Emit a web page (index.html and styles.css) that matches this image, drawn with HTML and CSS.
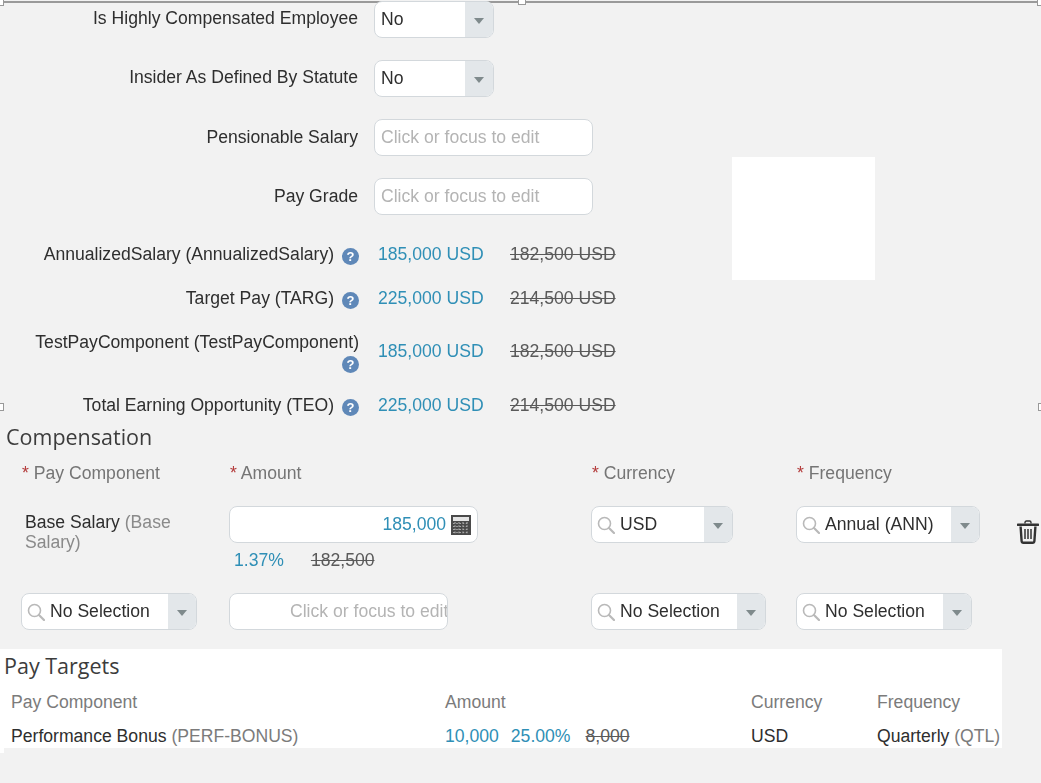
FILE: index.html
```html
<!DOCTYPE html>
<html lang="en">
<head>
<meta charset="utf-8">
<title>Compensation</title>
<link rel="stylesheet" href="styles.css">
</head>
<body>
<svg class="defs" width="0" height="0" aria-hidden="true">
  <symbol id="mag" viewBox="0 0 18 18"><circle cx="7.5" cy="7.5" r="6" fill="none" stroke="#b9b9b9" stroke-width="1.6"/><path d="M12 12l5 5" stroke="#b9b9b9" stroke-width="2.2" stroke-linecap="round"/></symbol>
  <symbol id="help" viewBox="0 0 17 17"><circle cx="8.5" cy="8.5" r="8.5" fill="#5f88b8"/><text x="8.5" y="13" text-anchor="middle" class="help-q">?</text></symbol>
</svg>
<div class="page">
  <div class="rule"></div>
  <span class="handle h-top-a"></span><span class="handle h-top-b"></span><span class="handle h-top-c"></span>
  <span class="handle h-mid-a"></span><span class="handle h-mid-b"></span>
  <div class="blank"></div>

  <section class="details">
    <div class="field-row"><label class="label">Is Highly Compensated Employee</label>
      <div class="box sel w-120"><span class="box-text">No</span><span class="arrow"></span></div></div>
    <div class="field-row"><label class="label">Insider As Defined By Statute</label>
      <div class="box sel w-120"><span class="box-text">No</span><span class="arrow"></span></div></div>
    <div class="field-row"><label class="label">Pensionable Salary</label>
      <div class="box w-219"><span class="box-text ph">Click or focus to edit</span></div></div>
    <div class="field-row"><label class="label">Pay Grade</label>
      <div class="box w-219"><span class="box-text ph">Click or focus to edit</span></div></div>
  </section>

  <section class="values">
    <div class="value-row"><div class="vlabel">AnnualizedSalary (AnnualizedSalary) <svg class="help"><use href="#help"/></svg></div><span class="new">185,000 USD</span><s class="old">182,500 USD</s></div>
    <div class="value-row"><div class="vlabel">Target Pay (TARG) <svg class="help"><use href="#help"/></svg></div><span class="new">225,000 USD</span><s class="old">214,500 USD</s></div>
    <div class="value-row tall"><div class="vlabel">TestPayComponent (TestPayComponent) <svg class="help"><use href="#help"/></svg></div><span class="new">185,000 USD</span><s class="old">182,500 USD</s></div>
    <div class="value-row"><div class="vlabel">Total Earning Opportunity (TEO) <svg class="help"><use href="#help"/></svg></div><span class="new">225,000 USD</span><s class="old">214,500 USD</s></div>
  </section>

  <section class="comp">
    <h2 class="title">Compensation</h2>
    <div class="comp-grid">
      <div class="head"><b>*</b> Pay Component</div>
      <div class="head"><b>*</b> Amount</div>
      <div class="head"><b>*</b> Currency</div>
      <div class="head"><b>*</b> Frequency</div>
      <div></div>

      <div class="base"><span class="dark">Base Salary</span> (Base Salary)</div>
      <div>
        <div class="box w-249 amount"><span class="amount-val">185,000</span>
          <svg class="calc" viewBox="0 0 20 20"><rect width="20" height="20" fill="#4a4a4a"/><rect x="2" y="2" width="16" height="4" fill="#e4e4e4"/><path d="M2 8.5h16M2 11.5h16M2 14.5h16M2 17.5h16M4 7v12M8 7v12M12 7v12M16 7v12" stroke="#a8a8a8" stroke-width="1.2" stroke-dasharray="1.6 1.6"/></svg>
        </div>
        <div class="sub"><span class="new">1.37%</span><s class="old">182,500</s></div>
      </div>
      <div class="box sel w-142"><svg class="mag"><use href="#mag"/></svg><span class="box-text">USD</span><span class="arrow"></span></div>
      <div class="box sel w-184"><svg class="mag"><use href="#mag"/></svg><span class="box-text">Annual (ANN)</span><span class="arrow"></span></div>
      <svg class="trash" viewBox="0 0 22 24"><path d="M8 3.5V2.4C8 1.6 8.6 1 9.4 1h3.2c.8 0 1.4.6 1.4 1.4v1.1" fill="none" stroke="#333" stroke-width="1.4"/><path d="M1 4.8h20" stroke="#333" stroke-width="2.6" stroke-linecap="round"/><path d="M3.6 6.5l1 14.5c.1 1.1.8 1.8 1.8 1.8h9.2c1 0 1.7-.7 1.8-1.8l1-14.5" fill="none" stroke="#333" stroke-width="2.4"/><path d="M8 9v10M11 9v10M14 9v10" stroke="#333" stroke-width="1.5"/></svg>

      <div class="box sel w-176"><svg class="mag"><use href="#mag"/></svg><span class="box-text">No Selection</span><span class="arrow"></span></div>
      <div class="box w-219 clip"><span class="clip-text">Click or focus to edit</span></div>
      <div class="box sel w-175"><svg class="mag"><use href="#mag"/></svg><span class="box-text">No Selection</span><span class="arrow"></span></div>
      <div class="box sel w-176"><svg class="mag"><use href="#mag"/></svg><span class="box-text">No Selection</span><span class="arrow"></span></div>
      <div></div>
    </div>
  </section>

  <section class="targets">
    <h2 class="title title-t">Pay Targets</h2>
    <div class="t-grid">
      <div class="t-head">Pay Component</div><div class="t-head">Amount</div><div class="t-head">Currency</div><div class="t-head">Frequency</div>
      <div><span class="dark">Performance Bonus</span> <span class="muted">(PERF-BONUS)</span></div>
      <div class="t-amount"><span class="new">10,000</span><span class="new">25.00%</span><s class="old">8,000</s></div>
      <div class="dark">USD</div>
      <div><span class="dark">Quarterly</span> <span class="muted">(QTL)</span></div>
    </div>
  </section>
</div>
</body>
</html>
```

FILE: styles.css
```css
* { box-sizing: border-box; }
html, body { margin: 0; padding: 0; background: #f2f2f2; }
body { font-family: "Liberation Sans", Arial, sans-serif; font-size: 17.6px; color: #2e2e2e; overflow: hidden; }
.defs { position: absolute; }
.page { position: relative; width: 1041px; height: 783px; overflow: hidden; padding-top: 1px; filter: blur(0.35px); }

.rule { position: absolute; left: 0; right: 0; top: 1px; height: 2px; background: #9a9a9a; }
.handle { position: absolute; width: 8px; height: 8px; background: #fff; border: 1px solid #999; }
.h-top-a { left: -4px; top: -2px; }
.h-top-b { left: 518px; top: -3px; }
.h-top-c { left: 1037px; top: -2px; }
.h-mid-a { left: -4px; top: 403px; }
.h-mid-b { left: 1038px; top: 403px; }
.blank { position: absolute; left: 732px; top: 157px; width: 143px; height: 123px; background: #fff; }

.details { display: flex; flex-direction: column; gap: 22px; }
.field-row { display: flex; align-items: center; gap: 16px; }
.label { width: 358px; text-align: right; position: relative; top: -1px; white-space: nowrap; }
.field-row:nth-child(n+3) .label { top: 0; }

.box { position: relative; display: flex; align-items: center; height: 37px; background: #fff; border: 1.5px solid #d3d8dc; border-radius: 8px; overflow: hidden; flex: none; }
.box-text { padding-left: 6px; padding-bottom: 1px; white-space: nowrap; }
.sel .mag + .box-text { padding-left: 5px; }
.ph { color: #b4b4b4; padding-bottom: 0; }
.arrow { margin-left: auto; width: 28px; align-self: stretch; background: #e3e7ea; display: flex; align-items: center; justify-content: center; }
.arrow::after { content: ""; margin-top: 3px; border-left: 5px solid transparent; border-right: 5px solid transparent; border-top: 6px solid #7f8a8c; }
.mag { width: 18px; height: 18px; margin-left: 5px; flex: none; }

.w-120 { width: 120px; }
.w-249 { width: 249px; }
.w-142 { width: 142px; }
.w-184 { width: 184px; }
.w-175 { width: 175px; }
.w-176 { width: 176px; }
.w-219 { width: 219px; }

.values { margin-top: 28px; display: flex; flex-direction: column; gap: 22px; }
.value-row { display: grid; grid-template-columns: 359px 151px auto; line-height: 22px; align-items: center; }
.vlabel { padding-left: 29px; text-align: right; }
.tall { margin-bottom: -3px; }
.tall .new, .tall .old { padding-bottom: 4px; }
.help { width: 17px; height: 17px; vertical-align: -5px; margin-left: 3px; }
.tall .help { vertical-align: -3px; }
.help-q { font: bold 13px "Liberation Sans", Arial, sans-serif; fill: #fff; }
.new { color: #2f8fb6; justify-self: start; padding-left: 19px; white-space: nowrap; }
.old { color: #5a5a5a; white-space: nowrap; }

.comp { margin-top: 6px; }
.title { margin: 0; font: 400 21.5px/30px "Open Sans", sans-serif; color: #3c3c3c; padding-left: 6px; }
.comp-grid { display: grid; grid-template-columns: 208px 362px 205px 221px auto; padding-left: 21px; margin-top: 10px; align-items: start; }
.head { color: #757575; line-height: 22px; height: 44px; padding-left: 1px; }
.head b { color: #b33a3a; font-weight: 400; }
.base { color: #8a8a8a; line-height: 20px; padding: 6px 10px 0 4px; }
.dark { color: #2e2e2e; }
.amount { justify-content: flex-end; padding-right: 6px; }
.amount-val { color: #2f8fb6; margin-right: 5px; }
.calc { width: 20px; height: 20px; }
.sub { display: flex; margin-top: 6px; height: 44px; line-height: 22px; }
.sub .new { padding-left: 5px; }
.sub .old { margin-left: 27px; }
.trash { width: 22px; height: 24px; margin-top: 14px; }
.clip { padding: 0; }
.clip-text { color: #b4b4b4; white-space: nowrap; padding-left: 60px; padding-bottom: 1px; }

.targets { position: relative; margin-top: 19px; width: 1002px; height: 99px; background: #fff; }
.targets::after { content: ""; position: absolute; left: 0; top: 99px; width: 4px; height: 5px; background: #fff; }
.title-t { padding-left: 4px; line-height: 34px; }
.t-grid { display: grid; grid-template-columns: 434px 306px 126px auto; padding-left: 11px; margin-top: 8px; row-gap: 12px; line-height: 22px; white-space: nowrap; }
.t-head, .muted { color: #7b7b7b; }
.t-amount { display: flex; gap: 12px; }
.t-amount .new { padding-left: 0; }
.t-amount .old { margin-left: 3px; }
```
